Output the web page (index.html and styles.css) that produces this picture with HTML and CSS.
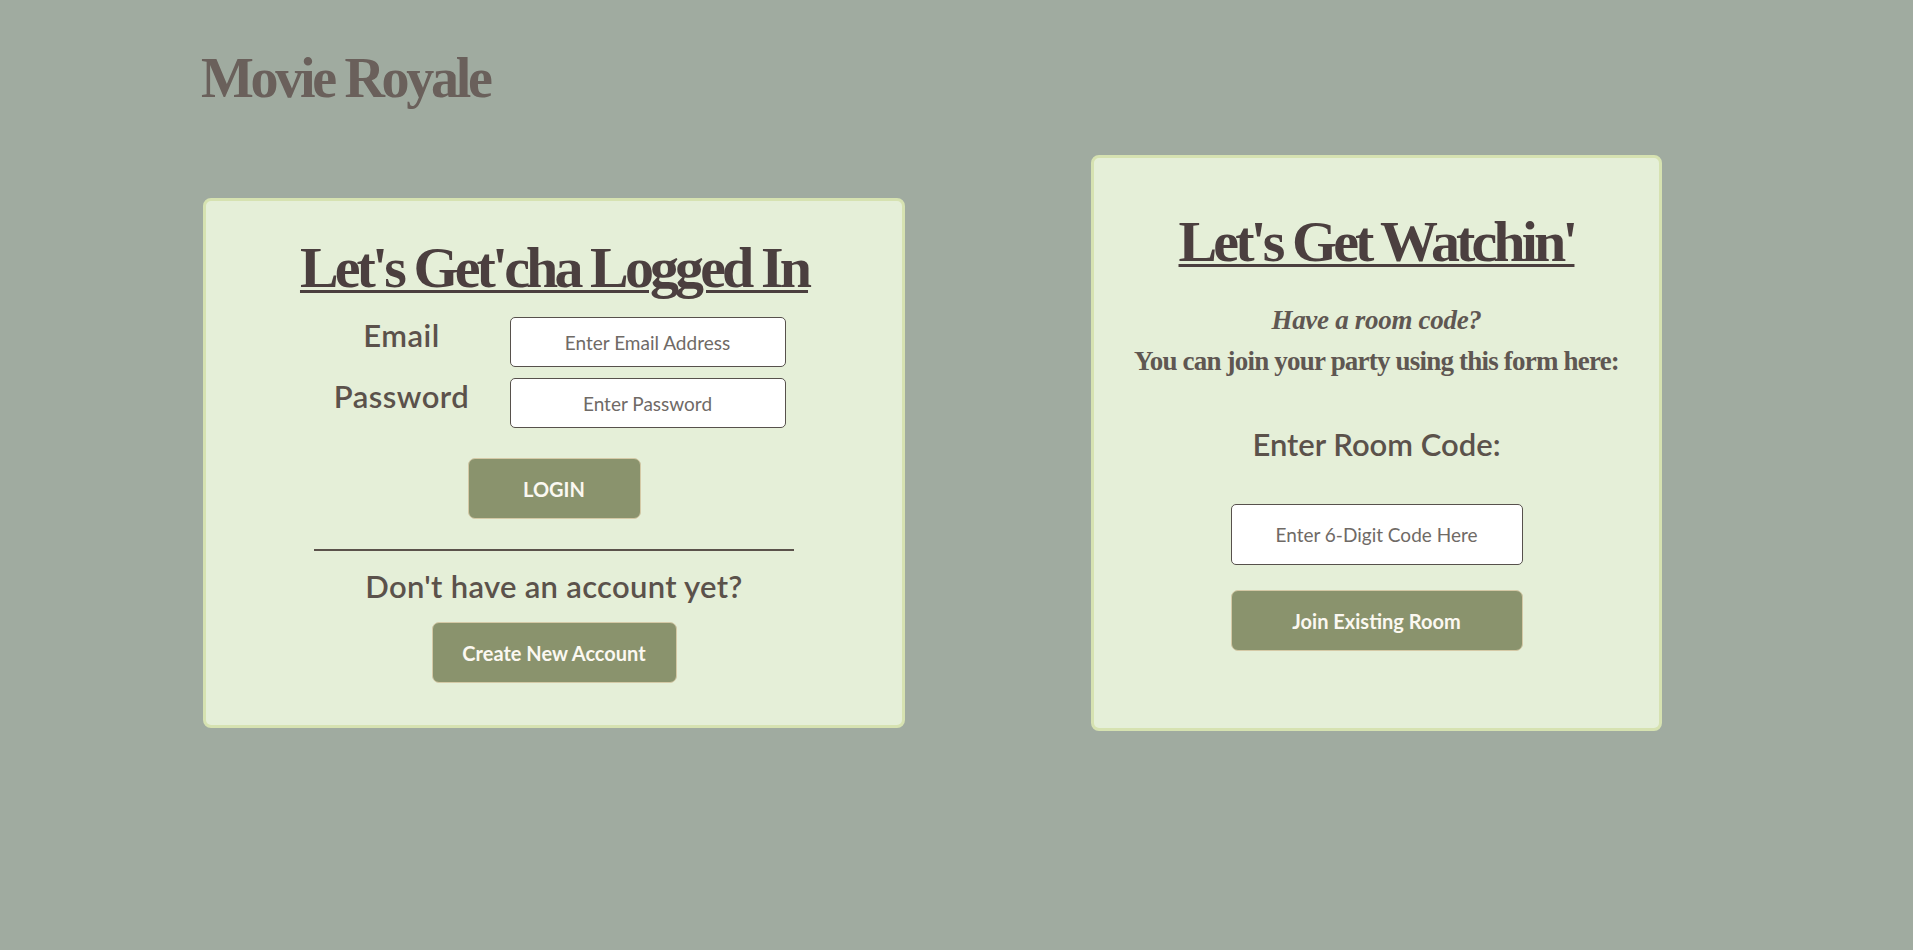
FILE: index.html
```html
<!DOCTYPE html>
<html lang="en">
<head>
<meta charset="utf-8">
<title>Movie Royale</title>
<link rel="stylesheet" href="styles.css">
</head>
<body>
<header class="site-header">
  <h1 class="brand">Movie Royale</h1>
</header>
<main class="panels">
  <section class="card card-login">
    <h2 class="card-title">Let's Get'cha Logged In</h2>
    <form class="login-form">
      <label class="field-label" for="email">Email</label>
      <input class="text-input" id="email" type="email" placeholder="Enter Email Address">
      <label class="field-label" for="password">Password</label>
      <input class="text-input" id="password" type="password" placeholder="Enter Password">
    </form>
    <button class="btn btn-login" type="button">LOGIN</button>
    <hr class="divider">
    <p class="prompt">Don't have an account yet?</p>
    <button class="btn btn-create" type="button">Create New Account</button>
  </section>
  <section class="card card-join">
    <h2 class="card-title">Let's Get Watchin'</h2>
    <p class="lead-italic">Have a room code?</p>
    <p class="lead">You can join your party using this form here:</p>
    <p class="room-label">Enter Room Code:</p>
    <input class="text-input code-input" type="text" placeholder="Enter 6-Digit Code Here">
    <button class="btn btn-join" type="button">Join Existing Room</button>
  </section>
</main>
</body>
</html>
```
FILE: styles.css
```css
* { box-sizing: border-box; }

body {
  margin: 0;
  min-height: 100vh;
  background: #a0aba0;
  font-family: Lato, "Open Sans", sans-serif;
}

.site-header {
  padding: 50px 0 0 201px;
}

.brand {
  margin: 0;
  font: bold 56px/1 "Liberation Serif", serif;
  letter-spacing: -3.3px;
  color: #6a605b;
}

.panels {
  display: flex;
  align-items: flex-start;
  gap: 186px;
  padding-left: 203px;
  margin-top: 49px;
}

.card {
  display: flex;
  flex-direction: column;
  align-items: center;
  background: #e5efd8;
  border: 3px solid #d6e2b1;
  border-radius: 8px;
}

.card-login {
  width: 702px;
  margin-top: 43px;
  padding: 38px 0 42px;
}

.card-join {
  width: 571px;
  padding: 55px 0 77px;
}

.card-title {
  margin: 0;
  font: bold 58px/58px "Liberation Serif", serif;
  letter-spacing: -3.9px;
  color: #4b3f3f;
  text-decoration: underline;
  text-decoration-thickness: 3px;
  text-underline-offset: 3px;
}

.login-form {
  display: grid;
  grid-template-columns: 150px 276px;
  column-gap: 33px;
  row-gap: 11px;
  margin-top: 20px;
  margin-left: 4px;
}

.field-label {
  align-self: start;
  text-align: center;
  font-size: 31px;
  font-weight: 600;
  letter-spacing: 0.5px;
  line-height: 36px;
  color: #5b524b;
}

.text-input {
  height: 50px;
  width: 100%;
  border: 1px solid #57514c;
  border-radius: 5px;
  background: #fff;
  text-align: center;
  font-family: Lato, sans-serif;
  font-size: 19px;
  color: #4b3f3f;
}

.text-input::placeholder {
  color: #6f6a66;
}

.btn {
  height: 61px;
  border: 1px solid #d4c9a6;
  border-radius: 7px;
  background: #8a936d;
  color: #fbf8f1;
  font-family: Lato, sans-serif;
  font-weight: bold;
  font-size: 20px;
}

.btn-login {
  width: 173px;
  margin-top: 30px;
}

.divider {
  width: 480px;
  height: 2px;
  margin: 30px 0 0;
  border: 0;
  background: #5b524b;
}

.prompt {
  margin: 17px 0 0;
  font-size: 31px;
  font-weight: 600;
  letter-spacing: 0.3px;
  line-height: 36px;
  color: #5b524b;
}

.btn-create {
  width: 245px;
  margin-top: 18px;
}

.lead-italic {
  margin: 32px 0 0;
  font: italic bold 27px/34px "Liberation Serif", serif;
  letter-spacing: -0.3px;
  color: #5f5752;
}

.lead {
  margin: 7px 0 0;
  font: bold 27px/34px "Liberation Serif", serif;
  letter-spacing: -0.8px;
  color: #5f5752;
}

.room-label {
  margin: 48px 0 0;
  font-size: 31px;
  font-weight: 600;
  line-height: 36px;
  color: #5b524b;
}

.code-input {
  width: 292px;
  height: 61px;
  margin-top: 42px;
}

.btn-join {
  width: 292px;
  margin-top: 25px;
}
```
